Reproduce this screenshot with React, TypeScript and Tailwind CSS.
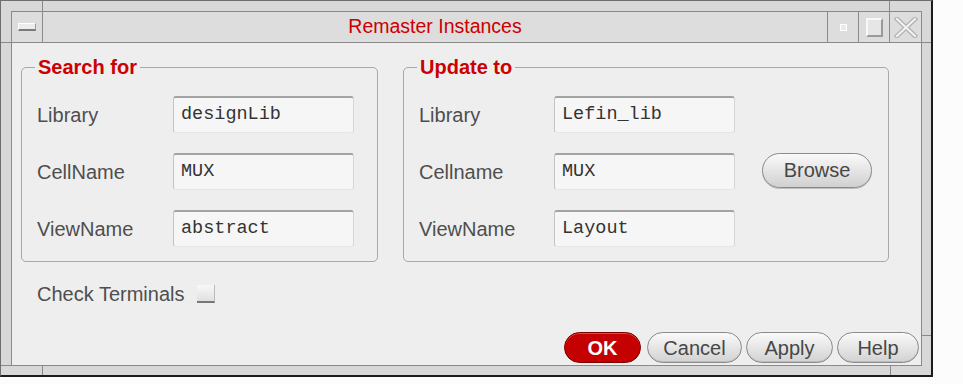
import React from 'react';

const sans = "font-['Liberation_Sans',Arial,Helvetica,sans-serif]";
const mono = "font-['Liberation_Mono','Courier_New',monospace]";

function Field({ label, value, labelW }: { label: string; value: string; labelW: string }) {
  return (
    <div className="flex items-center h-[37px]">
      <span className={`${labelW} text-[20px] text-[#4e4e4e]`}>{label}</span>
      <div className={`w-[181px] h-[37px] flex items-center pl-[7px] bg-[#f6f6f6] rounded-[3px] border-t-2 border-t-[#a3a3a3] border-l border-l-[#c4c4c4] border-r border-r-[#d6d6d6] border-b border-b-[#e6e6e6] ${mono} text-[18.5px] text-[#333]`}>
        {value}
      </div>
    </div>
  );
}

function PillButton({ children, w, primary }: { children: React.ReactNode; w: string; primary?: boolean }) {
  return (
    <button
      className={`${w} h-[31px] rounded-full text-[20px] leading-none flex items-center justify-center ${
        primary
          ? 'bg-[#c40000] border border-[#7a0000] text-white font-bold shadow-[inset_0_1px_0_#e44]'
          : 'bg-gradient-to-b from-[#fafafa] to-[#d2d2d2] border border-[#8a8a8a] text-[#474747] shadow-[inset_0_-1px_0_#bdbdbd]'
      }`}
    >
      {children}
    </button>
  );
}

export default function App() {
  return (
    <div className={`w-[963px] h-[384px] bg-[#fcfcfc] ${sans}`}>
      <div className="relative w-[933px] h-[377px] bg-[#d8d8d8] border-l border-t border-[#6e6e6e] border-r-2 border-b-2 border-r-[#1c1c1c] border-b-[#1c1c1c] pt-[10px] pl-[10px] pr-[9px] pb-[9px]">
        {/* frame resize marks */}
        <div className="absolute left-[41px] top-0 w-px h-[10px] bg-[#8a8a8a]" />
        <div className="absolute left-0 top-[41px] w-[10px] h-px bg-[#8a8a8a]" />
        <div className="absolute left-[888px] top-0 w-px h-[10px] bg-[#8a8a8a]" />
        <div className="absolute left-[921px] top-[41px] w-[9px] h-px bg-[#8a8a8a]" />
        <div className="absolute left-0 top-[364px] w-[10px] h-px bg-[#8a8a8a]" />
        <div className="absolute left-[41px] top-[365px] w-px h-[9px] bg-[#8a8a8a]" />
        <div className="absolute left-[889px] top-[365px] w-px h-[9px] bg-[#8a8a8a]" />
        <div className="absolute left-[921px] top-[334px] w-[9px] h-px bg-[#8a8a8a]" />

        <div className="w-[911px] h-[355px] border border-[#8a8a8a] flex flex-col bg-[#eeeeee]">
          {/* title bar */}
          <div className="flex h-[31px] border-b border-[#8a8a8a] bg-[#dddddd]">
            <div className="w-[31px] border-r border-[#8a8a8a] flex items-center justify-center">
              <div className="w-[18px] h-[8px] bg-[#ececec] border-t border-l border-white border-b-2 border-r border-b-[#7a7a7a] border-r-[#9a9a9a]" />
            </div>
            <div className="flex-1 flex items-center justify-center text-[19.5px] text-[#cc0000]">Remaster Instances</div>
            <div className="w-[31px] border-l border-[#8a8a8a] flex items-center justify-center">
              <div className="w-[7px] h-[7px] bg-[#eaeaea] border-t border-l border-white border-b border-r border-[#808080]" />
            </div>
            <div className="w-[31px] border-l border-[#8a8a8a] flex items-center justify-center">
              <div className="w-[17px] h-[19px] bg-[#e6e6e6] border-t-2 border-l-2 border-[#f8f8f8] border-b-2 border-r-2 border-b-[#9a9a9a] border-r-[#9a9a9a]" />
            </div>
            <div className="w-[32px] border-l border-[#8a8a8a] flex items-center justify-center">
              <svg width="24" height="21" viewBox="0 0 24 21">
                <path d="M3 2 L21 19 M21 2 L3 19" stroke="#b0b0b0" strokeWidth="4.5" strokeLinecap="square" fill="none" />
                <path d="M3 2 L21 19 M21 2 L3 19" stroke="#f2f2f2" strokeWidth="2.2" strokeLinecap="square" fill="none" />
              </svg>
            </div>
          </div>

          {/* groups */}
          <div className="flex gap-[25px] ml-[9px] mt-[24px]">
            <div className="relative w-[357px] h-[195px] border border-[#a8a8a8] rounded-[5px] pl-[15px] pt-[28px] flex flex-col gap-[20px]">
              <span className="absolute -top-[13px] left-[13px] px-[3px] bg-[#eeeeee] text-[20px] leading-[24px] font-bold text-[#cc0000]">Search for</span>
              <Field label="Library" value="designLib" labelW="w-[136px]" />
              <Field label="CellName" value="MUX" labelW="w-[136px]" />
              <Field label="ViewName" value="abstract" labelW="w-[136px]" />
            </div>
            <div className="relative w-[486px] h-[195px] border border-[#a8a8a8] rounded-[5px] pl-[15px] pt-[28px] flex flex-col gap-[20px]">
              <span className="absolute -top-[13px] left-[13px] px-[3px] bg-[#eeeeee] text-[20px] leading-[24px] font-bold text-[#cc0000]">Update to</span>
              <Field label="Library" value="Lefin_lib" labelW="w-[135px]" />
              <div className="flex items-center">
                <Field label="Cellname" value="MUX" labelW="w-[135px]" />
                <div className="ml-[27px] -mt-[3px]">
                  <button className="w-[110px] h-[35px] rounded-full text-[20px] leading-none text-[#474747] bg-gradient-to-b from-[#fafafa] to-[#d0d0d0] border border-[#8a8a8a] shadow-[0_1px_0_#bdbdbd]">
                    Browse
                  </button>
                </div>
              </div>
              <Field label="ViewName" value="Layout" labelW="w-[135px]" />
            </div>
          </div>

          {/* check terminals */}
          <div className="flex items-center h-[18px] mt-[23px] ml-[25px]">
            <span className="text-[20px] text-[#4e4e4e]">Check Terminals</span>
            <div className="ml-[13px] w-[18px] h-[18px] bg-gradient-to-b from-[#f8f8f8] to-[#e0e0e0] border-b-2 border-b-[#777] border-r border-r-[#bbb]" />
          </div>

          {/* action buttons */}
          <div className="mt-auto mb-[2px] mr-[2px] flex justify-end gap-[4px]">
            <div className="mr-[2px]">
              <PillButton w="w-[77px]" primary>OK</PillButton>
            </div>
            <PillButton w="w-[95px]">Cancel</PillButton>
            <PillButton w="w-[87px]">Apply</PillButton>
            <PillButton w="w-[82px]">Help</PillButton>
          </div>
        </div>
      </div>
    </div>
  );
}
